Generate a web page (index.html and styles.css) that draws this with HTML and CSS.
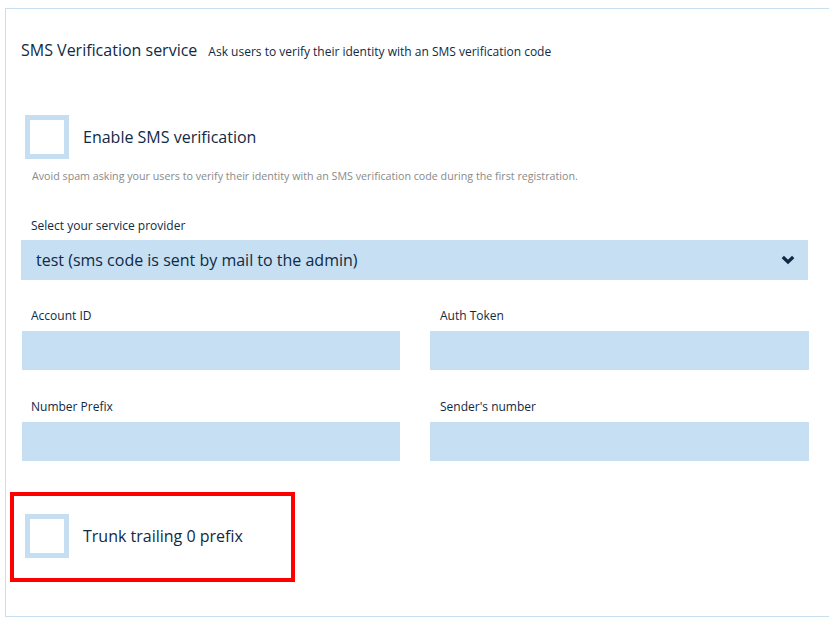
FILE: index.html
```html
<!DOCTYPE html>
<html lang="en">
  <head>
    <meta charset="UTF-8" />
    <meta name="viewport" content="width=device-width, initial-scale=1.0" />
    <title>SMS Verification service</title>
    <link rel="stylesheet" href="styles.css">
  </head>
  <body>
    <section class="panel">
      <header class="panel-head">
        <h2>SMS Verification service</h2>
        <p>Ask users to verify their identity with an SMS verification code</p>
      </header>

      <label class="check">
        <span class="box"></span>
        <span class="check-label">Enable SMS verification</span>
      </label>
      <p class="help">Avoid spam asking your users to verify their identity with an SMS verification code during the first registration.</p>

      <div class="field">
        <label class="field-label">Select your service provider</label>
        <div class="select">
          <span>test (sms code is sent by mail to the admin)</span>
          <svg width="14" height="10" viewBox="0 0 14 10">
            <polyline points="1.8,2 7,7 12.2,2" fill="none" stroke="#0f2a44" stroke-width="3.2" />
          </svg>
        </div>
      </div>

      <div class="grid">
        <div class="field">
          <label class="field-label">Account ID</label>
          <div class="input"></div>
        </div>
        <div class="field">
          <label class="field-label">Auth Token</label>
          <div class="input"></div>
        </div>
        <div class="field">
          <label class="field-label">Number Prefix</label>
          <div class="input"></div>
        </div>
        <div class="field">
          <label class="field-label">Sender's number</label>
          <div class="input"></div>
        </div>
      </div>

      <!-- highlighted option -->
      <div class="highlight">
        <label class="check">
          <span class="box"></span>
          <span class="check-label">Trunk trailing 0 prefix</span>
        </label>
      </div>
    </section>
  </body>
</html>
```

FILE: styles.css
```css
* {
  box-sizing: border-box;
  margin: 0;
  padding: 0;
}

body {
  font-family: "Open Sans", "Noto Sans", sans-serif;
  background-color: #fff;
  color: #0f2a44;
  overflow: hidden;
}

.panel {
  margin: 8px 0 0 5px;
  width: 840px;
  border: 1px solid #c8dff0;
  padding: 31px 0 34px 15px;
}

.panel-head {
  display: flex;
  align-items: center;
  height: 20px;
}

.panel-head h2 {
  font-size: 16px;
  font-weight: 400;
  line-height: 20px;
}

.panel-head p {
  font-size: 12px;
  margin-left: 11px;
  padding-top: 2px;
}

.check {
  display: flex;
  align-items: center;
  height: 44px;
  margin: 55px 0 0 4px;
}

.box {
  width: 44px;
  height: 44px;
  border: 5px solid #c6def2;
  background: #fff;
}

.check-label {
  font-size: 16px;
  margin-left: 14px;
}

.help {
  font-size: 10.7px;
  color: #8a8a8a;
  line-height: 16px;
  margin: 9px 0 0 11px;
}

.field-label {
  display: block;
  font-size: 12px;
  line-height: 16px;
  padding-left: 10px;
}

.field > .field-label {
  margin-top: 34px;
}

.select {
  display: flex;
  align-items: center;
  justify-content: space-between;
  width: 787px;
  height: 40px;
  margin-top: 6px;
  padding: 0 13px 0 15px;
  background: #c6dff2;
  font-size: 16px;
}

.select svg {
  margin-top: -1px;
}

.grid {
  display: grid;
  grid-template-columns: 378px 379px;
  column-gap: 30px;
  margin-left: 1px;
}

.grid .field > .field-label {
  margin-top: 28px;
  padding-left: 9px;
}

.grid .field:nth-child(even) > .field-label {
  padding-left: 10px;
}

.grid .field:nth-child(n+3) > .field-label {
  margin-top: 29px;
}

.input {
  height: 39px;
  margin-top: 7px;
  background: #c6dff2;
}

.highlight {
  width: 285px;
  height: 90px;
  margin: 31px 0 0 -11px;
  border: 4px solid #ff0000;
  padding: 18px 0 0 10px;
}

.highlight .check {
  margin: 0;
  margin-left: 1px;
}
```
